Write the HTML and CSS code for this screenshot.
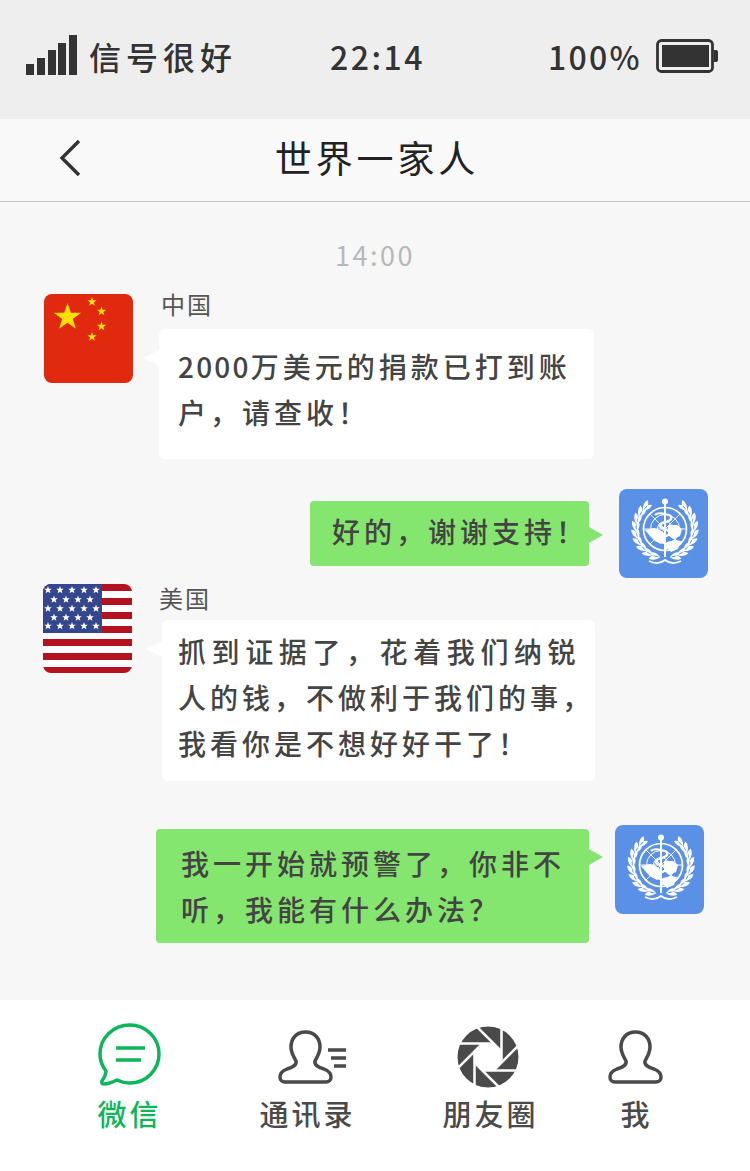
FILE: index.html
```html
<!DOCTYPE html>
<html lang="zh-CN">
<head>
  <meta charset="UTF-8">
  <title>世界一家人</title>
  <link rel="stylesheet" href="styles.css">
</head>
<body>
  <svg class="defs" width="0" height="0">
    <defs>
      <!-- a pair of laurel leaves, turned round the globe centre -->
      <path id="leaf" d="M46 69q-6 5-11 3q3-6 11-3zM46 68.500q-5-5-10-3q3 5 10 3z" fill="#fff"/>
      <g id="wreath">
        <use href="#leaf" transform="rotate(10 46 40)"/>
        <use href="#leaf" transform="rotate(25 46 40)"/>
        <use href="#leaf" transform="rotate(40 46 40)"/>
        <use href="#leaf" transform="rotate(55 46 40)"/>
        <use href="#leaf" transform="rotate(70 46 40)"/>
        <use href="#leaf" transform="rotate(85 46 40)"/>
        <use href="#leaf" transform="rotate(100 46 40)"/>
        <use href="#leaf" transform="rotate(115 46 40)"/>
        <use href="#leaf" transform="rotate(130 46 40)"/>
      </g>
      <g id="who">
        <use href="#wreath"/>
        <use href="#wreath" transform="translate(92 0) scale(-1 1)"/>
        <path d="M30 72c6 3 11 3 16-1c5 4 10 4 16 1" fill="none" stroke="#fff" stroke-width="1.800"/>
        <g fill="none" stroke="#fff">
          <circle cx="46" cy="40" r="21.500" stroke-width="1.700"/>
          <circle cx="46" cy="40" r="14.500" stroke-width="1"/>
          <circle cx="46" cy="40" r="7.500" stroke-width="1"/>
          <path d="M24.500 40h43M46 18.500v43M30.800 24.800l30.400 30.400M61.200 24.800L30.800 55.200" stroke-width="0.900"/>
        </g>
        <path d="M26 41l9-2 6 2 4 3 1 7-4 4-6-3-5-5zM49 36l9 0 5 4-2 7-7 3-5-4zM48 53l8-2 6 1-3 8-7 3-4-4z" fill="#fff"/>
        <rect x="45" y="12" width="2" height="56" fill="#fff"/>
        <circle cx="46" cy="12.500" r="3" fill="#fff"/>
        <path d="M36 26c3-3 8-2 14 0c4 2 3 5-3 7c-7 2-8 5-2 7c7 2 8 5 2 7c-6 2-6 5-1 7c3 1 3 3 1 6" fill="none" stroke="#fff" stroke-width="2.200"/>
      </g>
      <path id="star" d="M0-3.900l1 2.600 2.800.1-2.200 1.700.8 2.700L0 1.700l-2.400 1.500.8-2.700-2.200-1.700 2.800-.1z" fill="#fff"/>
      <g id="star-row5">
        <use href="#star" x="5"/><use href="#star" x="17"/><use href="#star" x="29"/><use href="#star" x="41"/><use href="#star" x="53"/>
      </g>
      <g id="star-row4">
        <use href="#star" x="11"/><use href="#star" x="23"/><use href="#star" x="35"/><use href="#star" x="47"/>
      </g>
      <path id="person" d="M27.500 2C18 2 13 9 13 17C13 23 16 27 18 31C19 35 15 37 9 39C4 41 2 44 2 47C2 50 4 52 7 52H48C51 52 53 50 53 47C53 44 51 41 46 39C40 37 36 35 37 31C39 27 42 23 42 17C42 9 37 2 27.500 2Z"/>
    </defs>
  </svg>

  <div class="app">
    <div class="status">
      <div class="signal">
        <svg class="signal-icon" width="51" height="40" viewBox="0 0 51 40"><path d="M0 29h8v11H0zM11 23h8v17h-8zM22 15h8v25h-8zM32 8h8v32h-8zM43 0h8v40h-8z" fill="#333"/></svg>
        <span>信号很好</span>
      </div>
      <div class="clock">22:14</div>
      <div class="power">
        <span>100%</span>
        <svg width="62" height="34" viewBox="0 0 62 34"><rect x="1.500" y="1.500" width="55" height="31" rx="4" fill="none" stroke="#333" stroke-width="2.800"/><rect x="6" y="6" width="47" height="22" fill="#333"/><path d="M58 11h2a2 2 0 0 1 2 2v8a2 2 0 0 1-2 2h-2z" fill="#333"/></svg>
      </div>
    </div>

    <div class="nav">
      <svg class="back" width="24" height="38" viewBox="0 0 24 38"><path d="M21 2L4 19L21 36" fill="none" stroke="#333" stroke-width="3.400"/></svg>
      <h1 class="title">世界一家人</h1>
    </div>

    <div class="chat">
      <div class="time">14:00</div>

      <div class="msg msg-china">
        <svg class="avatar" width="89" height="89" viewBox="0 0 89 89">
          <rect width="89" height="89" fill="#e1290f"/>
          <path d="M23.500 9l3.300 9.800h10.300l-8.300 6.100 3.100 9.800-8.400-6-8.400 6 3.100-9.800-8.300-6.100h10.300z" fill="#ffe000"/>
          <path d="M48 3l1.200 3.200 3.400.1-2.700 2.100 1 3.300-2.900-1.900-2.800 1.900.9-3.300-2.700-2.100 3.400-.1zM57.500 12.500l1.200 3.200 3.400.1-2.700 2.100 1 3.300-2.900-1.900-2.800 1.900.9-3.300-2.700-2.100 3.400-.1zM57.500 27.500l1.200 3.200 3.400.1-2.700 2.100 1 3.300-2.900-1.900-2.800 1.900.9-3.300-2.700-2.100 3.400-.1zM48 38l1.200 3.200 3.400.1-2.700 2.100 1 3.300-2.900-1.900-2.800 1.900.9-3.300-2.700-2.100 3.400-.1z" fill="#ffe000"/>
        </svg>
        <div class="body">
          <div class="name">中国</div>
          <div class="bubble left"><span class="num">2000</span>万美元的捐款已打到账<br>户，请查收！</div>
        </div>
      </div>

      <div class="msg msg-who1">
        <div class="bubble right green">好的，谢谢支持！</div>
        <svg class="avatar" width="89" height="89" viewBox="0 0 89 89"><rect width="89" height="89" fill="#5a91e6"/><use href="#who"/></svg>
      </div>

      <div class="msg msg-usa">
        <svg class="avatar" width="89" height="89" viewBox="0 0 89 89">
          <rect width="89" height="89" fill="#fff"/>
          <path d="M0 0h89v7H0zM0 14h89v7H0zM0 28h89v7H0zM0 42h89v7H0zM0 55h89v7H0zM0 69h89v7H0zM0 83h89v6H0z" fill="#b5121f"/>
          <rect width="59" height="49" fill="#34468c"/>
          <use href="#star-row5" y="6"/>
          <use href="#star-row4" y="15.500"/>
          <use href="#star-row5" y="24.500"/>
          <use href="#star-row4" y="33.500"/>
          <use href="#star-row5" y="42"/>
        </svg>
        <div class="body">
          <div class="name">美国</div>
          <div class="bubble left"><span class="wide">抓到证据了，花着我们纳锐</span><br>人的钱，不做利于我们的事，<br>我看你是不想好好干了！</div>
        </div>
      </div>

      <div class="msg msg-who2">
        <div class="bubble right green">我一开始就预警了，你非不<br>听，我能有什么办法？</div>
        <svg class="avatar" width="89" height="89" viewBox="0 0 89 89"><rect width="89" height="89" fill="#5a91e6"/><use href="#who"/></svg>
      </div>
    </div>

    <div class="tabs">
      <div class="tab active">
        <svg class="icon-chat" width="64" height="64" viewBox="0 0 64 64"><path d="M33 2C16 2 3 15 3 31C3 38 5 43 9 48C9 52 7 55 5 58C4 60 5 61 7 61C11 61 16 59 20 57C24 59 28 60 33 60C49 60 62 47 62 31C62 15 49 2 33 2Z" fill="none" stroke="#0bb759" stroke-width="3.500"/><path d="M19 25h29M19 37h25" stroke="#0bb759" stroke-width="3.600"/></svg>
        <span>微信</span>
      </div>
      <div class="tab">
        <svg class="icon-contacts" width="68" height="64" viewBox="0 0 68 64"><use href="#person" class="person" transform="translate(0 7)"/><path d="M50 27h18M53 35h15M56 43h12" stroke="#4a4a4a" stroke-width="3.400"/></svg>
        <span>通讯录</span>
      </div>
      <div class="tab">
        <svg class="icon-moments" width="62" height="64" viewBox="0 0 62 64">
          <circle cx="31" cy="32" r="30.500" fill="#4a4a4a"/>
          <g stroke="#fff" stroke-width="2.500">
            <path id="blade" d="M44.500 0V37"/>
            <use href="#blade" transform="rotate(45 31 32)"/>
            <use href="#blade" transform="rotate(90 31 32)"/>
            <use href="#blade" transform="rotate(135 31 32)"/>
            <use href="#blade" transform="rotate(180 31 32)"/>
            <use href="#blade" transform="rotate(225 31 32)"/>
            <use href="#blade" transform="rotate(270 31 32)"/>
            <use href="#blade" transform="rotate(315 31 32)"/>
          </g>
          <path d="M44.500 26.400V37.600L36.600 45.500H25.400L17.500 37.600V26.400L25.400 18.500H36.600Z" fill="#fff"/>
          <circle cx="31" cy="32" r="33" fill="none" stroke="#fff" stroke-width="4"/>
        </svg>
        <span>朋友圈</span>
      </div>
      <div class="tab">
        <svg width="55" height="64" viewBox="0 0 55 64"><use href="#person" class="person" transform="translate(0 7)"/></svg>
        <span>我</span>
      </div>
    </div>
  </div>
</body>
</html>
```

FILE: styles.css
```css
* {
  box-sizing: border-box;
}

body {
  margin: 0;
  font-family: "Noto Sans CJK SC", "Noto Sans", sans-serif;
  color: #333;
}

.defs {
  position: absolute;
}

.app {
  display: flex;
  flex-direction: column;
  width: 750px;
  height: 1171px;
  overflow: hidden;
  background-color: #fff;
}

/* status bar */
.status {
  display: grid;
  grid-template-columns: 304px 219px 1fr;
  align-items: center;
  height: 119px;
  padding: 0 31px 8px 26px;
  background-color: #eee;
  font-size: 32px;
  font-weight: 500;
  line-height: 40px;
}

.signal {
  display: flex;
  align-items: center;
  gap: 12px;
  letter-spacing: 5px;
}

.signal-icon {
  margin-top: -2px;
}

.clock {
  letter-spacing: 2.500px;
}

.power {
  display: flex;
  align-items: center;
  gap: 14px;
  margin-left: -1px;
  letter-spacing: 2.300px;
}

/* title bar */
.nav {
  position: relative;
  height: 83px;
  border-bottom: 1px solid #c4c4c4;
  background-color: #f9f9f9;
}

.back {
  position: absolute;
  left: 58px;
  top: 20px;
}

.title {
  margin: 0;
  padding-left: 4px;
  font-size: 37px;
  font-weight: 400;
  line-height: 76px;
  letter-spacing: 3.900px;
  text-align: center;
  color: #222;
}

/* messages */
.chat {
  flex: 1;
  padding-top: 35px;
  background-color: #f7f7f7;
}

.time {
  font-size: 27px;
  line-height: 36px;
  letter-spacing: 2.500px;
  text-align: center;
  color: #b8b8b8;
}

.msg {
  display: flex;
  align-items: flex-start;
}

.avatar {
  flex-shrink: 0;
  border-radius: 8px;
}

.body {
  display: flex;
  flex-direction: column;
  align-items: flex-start;
}

.name {
  font-size: 24px;
  line-height: 24px;
  letter-spacing: 2px;
  color: #555;
}

.bubble {
  position: relative;
  border-radius: 6px;
  background-color: #fff;
  font-size: 28px;
  font-weight: 500;
  line-height: 46px;
  letter-spacing: 4px;
  white-space: nowrap;
  color: #444;
}

.num {
  letter-spacing: 2.200px;
}

.wide {
  letter-spacing: 5.600px;
}

.bubble.left::before {
  content: "";
  position: absolute;
  left: -16px;
  top: 21px;
  border-style: solid;
  border-width: 8px 16px 8px 0;
  border-color: transparent #fff transparent transparent;
}

.bubble.right::after {
  content: "";
  position: absolute;
  right: -14px;
  top: 26px;
  border-style: solid;
  border-width: 8px 0 8px 14px;
  border-color: transparent transparent transparent #84e56f;
}

.green {
  border-radius: 4px;
  background-color: #84e56f;
}

.msg-china {
  margin-top: 21px;
  padding-left: 44px;
  gap: 26px;
}

.msg-china .name {
  margin: -2px 0 13px 2px;
}

.msg-china .bubble {
  width: 435px;
  padding: 14px 19px 24px;
}

.msg-who1 {
  justify-content: flex-end;
  margin-top: 30px;
  padding-right: 42px;
  gap: 30px;
}

.msg-who1 .bubble {
  width: 279px;
  margin-top: 12px;
  padding: 7px 0 12px 22px;
}

.msg-usa {
  margin-top: 6px;
  padding-left: 43px;
  gap: 28px;
}

.msg-usa .name {
  margin: 2px 0 10px -1px;
}

.msg-usa .bubble {
  width: 433px;
  margin-left: 2px;
  padding: 8px 0 15px 16px;
}

.msg-who2 {
  justify-content: flex-end;
  margin-top: 44px;
  padding-right: 46px;
  gap: 26px;
}

.msg-who2 .bubble {
  width: 433px;
  margin-top: 4px;
  padding: 11px 0 11px 25px;
}

.msg-who2 .bubble::after {
  top: 20px;
}

/* bottom tabs */
.tabs {
  display: grid;
  grid-template-columns: 180px 176px 190px 102px;
  height: 171px;
  padding: 23px 0 0 38px;
  background-color: #fff;
}

.tab {
  display: flex;
  flex-direction: column;
  align-items: center;
  font-size: 29px;
  font-weight: 500;
  line-height: 40px;
  letter-spacing: 3px;
  color: #4a4a4a;
}

.tab span {
  padding-left: 3px;
}

.tab svg {
  margin-bottom: 6px;
}

.tab.active {
  color: #0bb759;
}

.tab .icon-chat {
  margin-left: 2px;
}

.tab .icon-contacts {
  margin-left: 11px;
}

.tab .icon-moments {
  margin: 2px 3px 4px 0;
}

.person {
  fill: none;
  stroke: #4a4a4a;
  stroke-width: 3.500px;
}
```
